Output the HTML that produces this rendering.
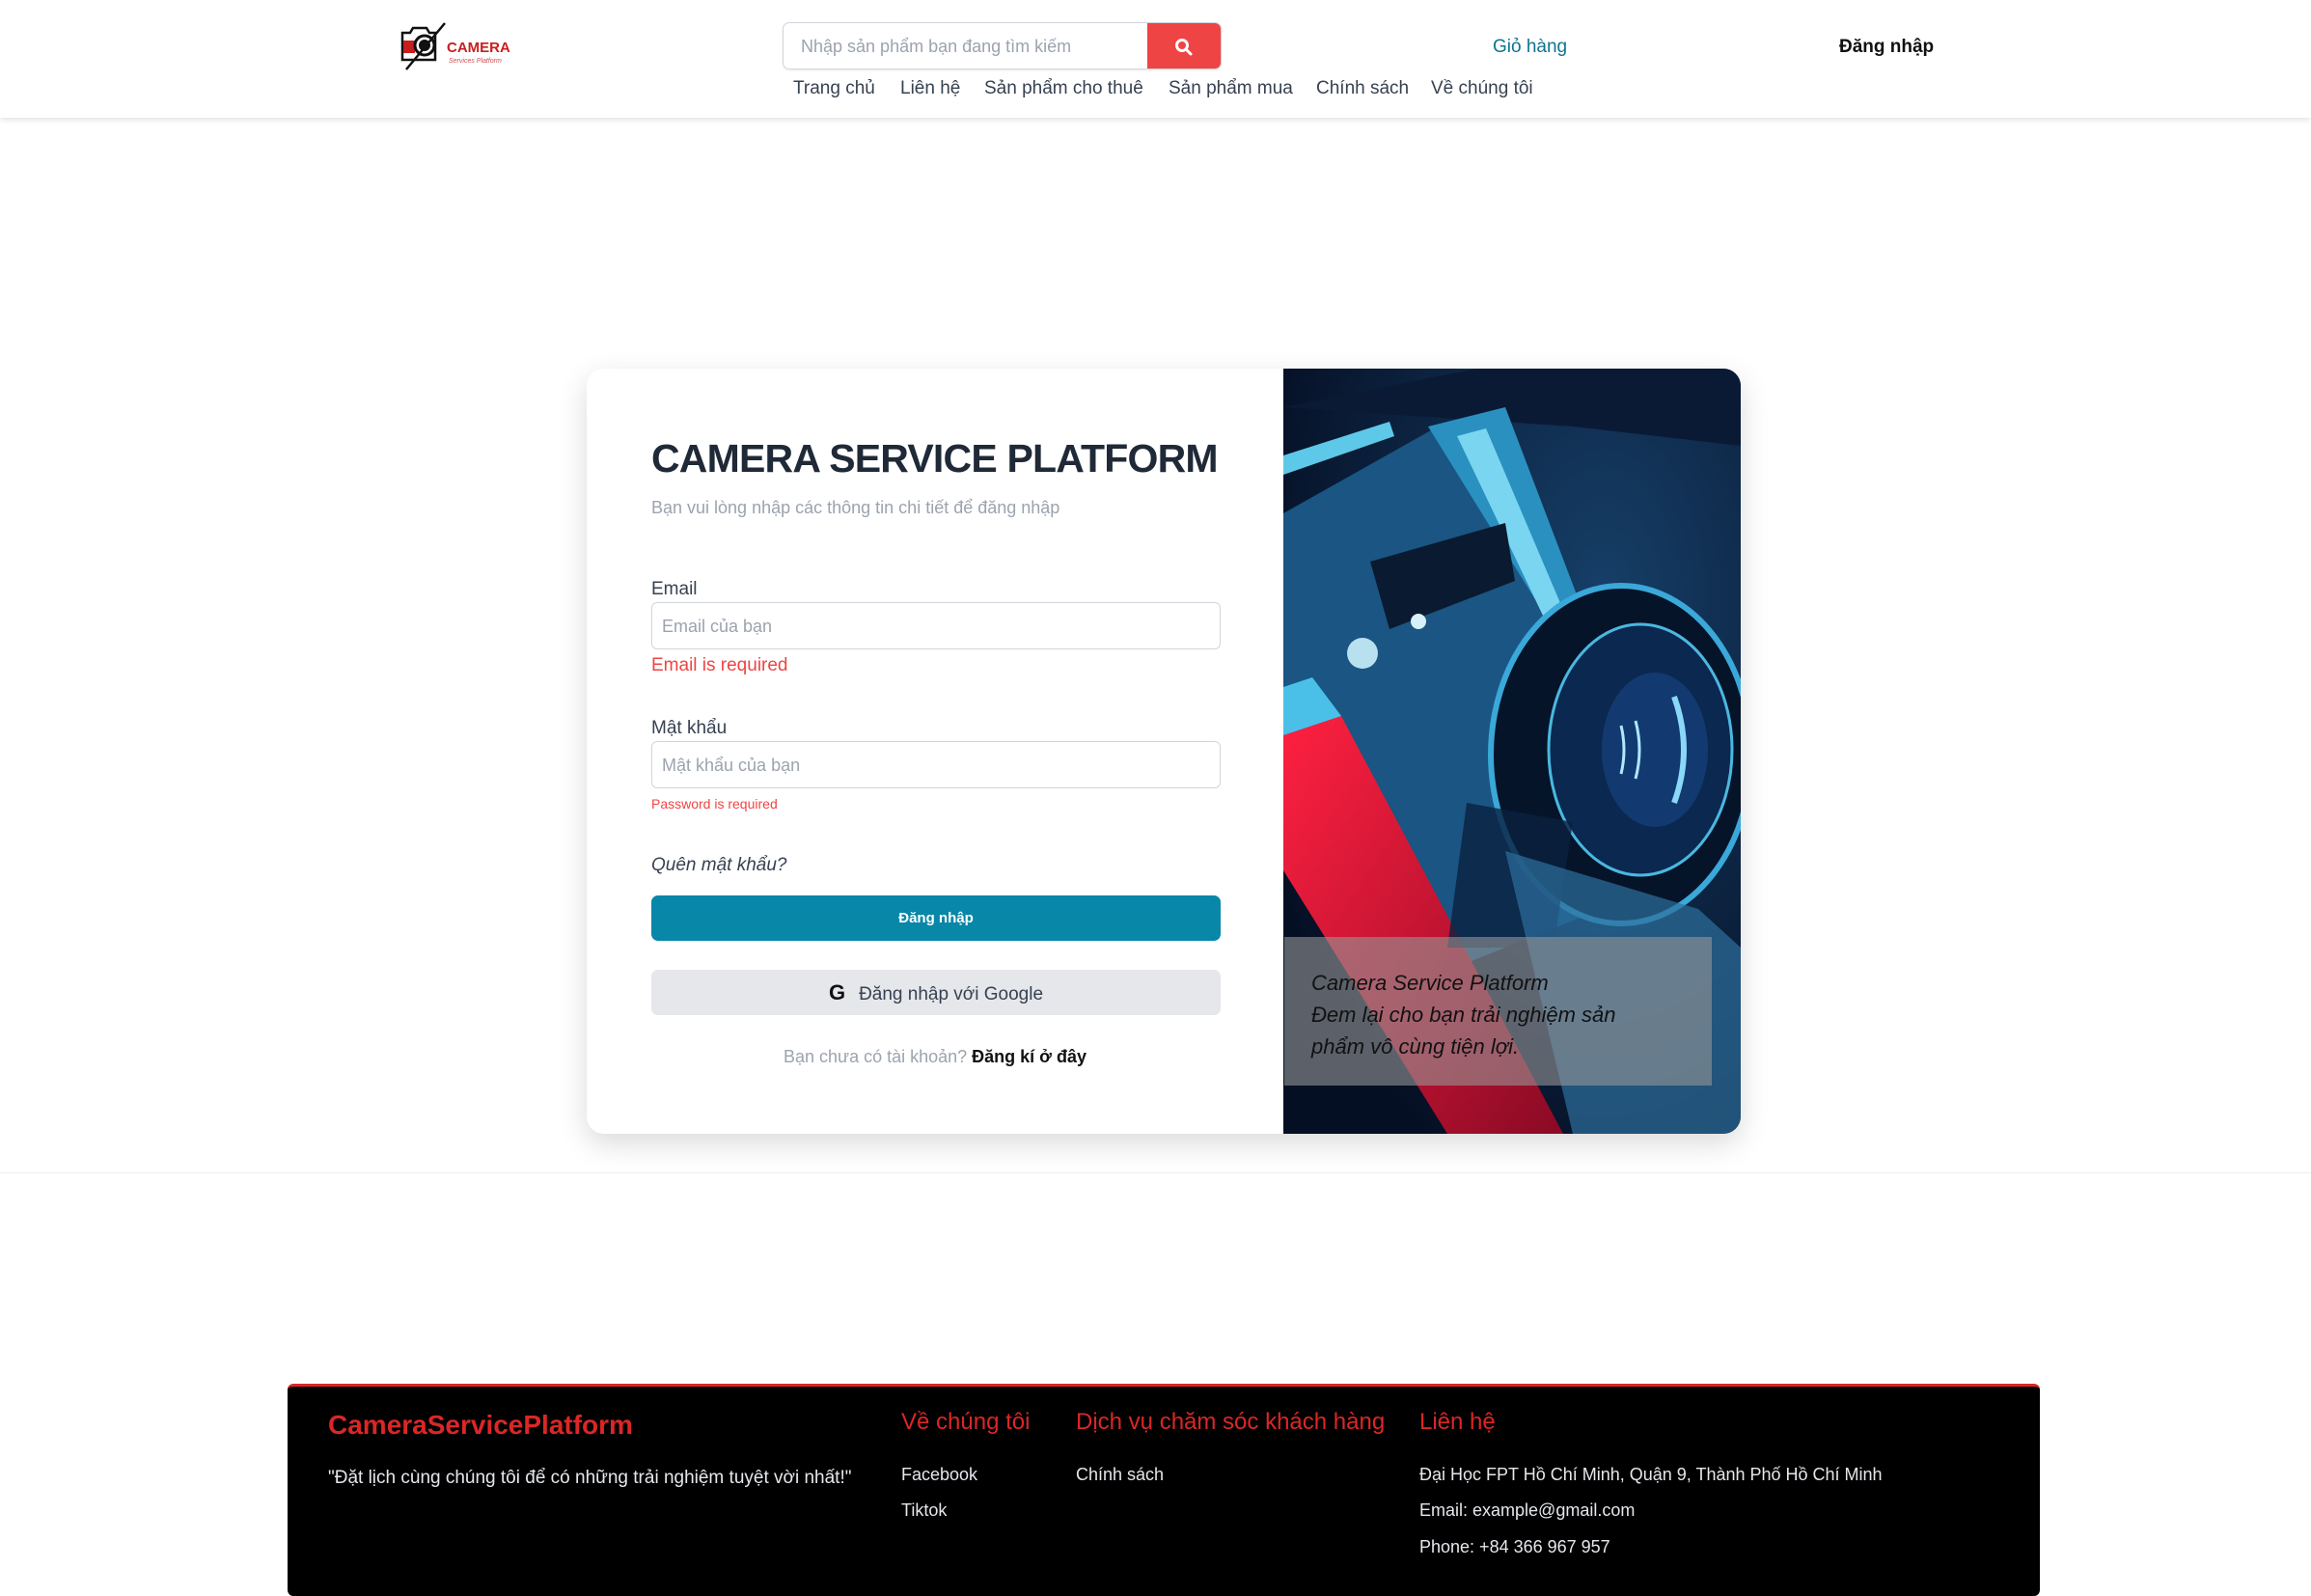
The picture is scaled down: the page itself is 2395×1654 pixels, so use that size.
<!DOCTYPE html>
<html><head><meta charset="utf-8">
<style>
*{box-sizing:border-box;margin:0;padding:0}
body{width:2395px;height:1643px;background:#fff;font-family:"Liberation Sans","DejaVu Sans",sans-serif;position:relative;overflow:hidden;color:#1f2937}
.a{position:absolute;white-space:nowrap}
header{position:absolute;left:0;top:0;width:2395px;height:122px;background:#fff;box-shadow:0 2px 6px rgba(0,0,0,.12)}
.nav span{position:absolute;top:81px;font-size:19px;color:#374151}
.inp{position:absolute;left:675px;width:590px;height:49px;border:1px solid #d1d5db;border-radius:6px;font-size:18px;color:#9ca3af;padding:14px 10px;line-height:20px}
.lbl{font-size:19px;color:#374151}
.err{color:#ef4444}
footer{position:absolute;left:298px;top:1434px;width:1816px;height:220px;background:#000;border-top:3px solid #dc2626;border-radius:6px}
footer .a{color:#e5e7eb;font-size:18px}
footer .h{color:#dc2626;font-size:24px}
</style></head><body>
<header>
 <svg class="a" style="left:413px;top:20px" width="115" height="56" viewBox="0 0 115 56">
  <path d="M4 14h8l3-5h14l3 5h6v28H4z" fill="none" stroke="#111" stroke-width="2.5"/>
  <rect x="5" y="22" width="12" height="13" fill="#c81e1e"/>
  <circle cx="27" cy="27" r="10" fill="none" stroke="#111" stroke-width="3"/>
  <circle cx="27" cy="27" r="6" fill="#111"/>
  <path d="M8 52L48 4" stroke="#111" stroke-width="2.5"/>
  <text x="50" y="34" font-family="Liberation Sans" font-weight="bold" font-size="15" fill="#c81e1e">CAMERA</text>
  <text x="52" y="45" font-family="Liberation Sans" font-style="italic" font-size="7" fill="#d05050">Services Platform</text>
 </svg>
 <div class="a" style="left:811px;top:23px;width:455px;height:49px;border:1px solid #d1d5db;border-radius:7px;overflow:hidden;box-shadow:0 1px 2px rgba(0,0,0,.08)">
  <div class="a" style="left:18px;top:14px;font-size:18px;color:#9ca3af">Nhập sản phẩm bạn đang tìm kiếm</div>
  <div class="a" style="right:0;top:0;width:76px;height:49px;background:#ef4444">
   <svg class="a" style="left:28px;top:15px" width="20" height="20" viewBox="0 0 20 20"><circle cx="8" cy="8" r="5.5" fill="none" stroke="#fff" stroke-width="3"/><path d="M12 12l5 5" stroke="#fff" stroke-width="3" stroke-linecap="round"/></svg>
  </div>
 </div>
 <div class="nav">
  <span style="left:822px">Trang chủ</span><span style="left:933px">Liên hệ</span><span style="left:1020px">Sản phẩm cho thuê</span><span style="left:1211px">Sản phẩm mua</span><span style="left:1364px">Chính sách</span><span style="left:1483px">Về chúng tôi</span>
 </div>
 <div class="a" style="left:1547px;top:38px;font-size:19px;color:#0e7490">Giỏ hàng</div>
 <div class="a" style="left:1906px;top:38px;font-size:19px;color:#111;font-weight:600">Đăng nhập</div>
</header>

<div class="a" style="left:0;top:1215px;width:2395px;height:1px;background:#eee"></div>

<div class="a" style="left:608px;top:382px;width:1196px;height:793px;border-radius:18px;background:#fff;box-shadow:0 10px 30px rgba(0,0,0,.15);overflow:hidden">
 <div class="a" style="left:67px;top:70px;font-size:41px;font-weight:bold;color:#1f2937;letter-spacing:-0.8px">CAMERA SERVICE PLATFORM</div>
 <div class="a" style="left:67px;top:134px;font-size:18px;color:#9ca3af">Bạn vui lòng nhập các thông tin chi tiết để đăng nhập</div>
 <div class="a lbl" style="left:67px;top:218px">Email</div>
 <div class="inp" style="left:67px;top:242px">Email của bạn</div>
 <div class="a err" style="left:67px;top:297px;font-size:19px">Email is required</div>
 <div class="a lbl" style="left:67px;top:362px">Mật khẩu</div>
 <div class="inp" style="left:67px;top:386px">Mật khẩu của bạn</div>
 <div class="a err" style="left:67px;top:443px;font-size:14px">Password is required</div>
 <div class="a" style="left:67px;top:504px;font-size:19px;font-style:italic;color:#374151">Quên mật khẩu?</div>
 <div class="a" style="left:67px;top:546px;width:590px;height:47px;background:#0887a8;border-radius:7px;color:#fff;font-weight:bold;font-size:15px;text-align:center;line-height:47px">Đăng nhập</div>
 <div class="a" style="left:67px;top:623px;width:590px;height:47px;background:#e5e7eb;border-radius:7px;color:#374151;font-size:19px;text-align:center;line-height:47px"><b style="font-size:22px;color:#111;margin-right:14px">G</b>Đăng nhập với Google</div>
 <div class="a" style="left:0;top:703px;width:722px;text-align:center;font-size:18px;color:#9ca3af">Bạn chưa có tài khoản? <b style="color:#111">Đăng kí ở đây</b></div>

 <svg class="a" style="left:722px;top:0" width="474" height="793" viewBox="0 0 474 793">
  <defs>
   <radialGradient id="bg" cx="0.7" cy="0.3" r="0.8"><stop offset="0" stop-color="#163f68"/><stop offset="1" stop-color="#050f24"/></radialGradient>
   <linearGradient id="red" x1="0" y1="0" x2="1" y2="1"><stop offset="0" stop-color="#ff2040"/><stop offset="1" stop-color="#8a0a25"/></linearGradient>
  </defs>
  <rect width="474" height="793" fill="url(#bg)"/>
  <path d="M0 40L200 0L474 0L474 80L300 60Z" fill="#0a1a35"/>
  <path d="M0 150L160 60L310 250L330 560L180 620L0 400Z" fill="#1a5583"/>
  <path d="M0 90L110 55L115 70L0 110Z" fill="#5ec8e8"/>
  <path d="M150 60L230 40L310 250L280 270Z" fill="#2a90c0"/>
  <path d="M180 70L210 62L290 250L270 258Z" fill="#7ad6f0"/>
  <path d="M90 200L230 160L240 220L110 270Z" fill="#0a1a30"/>
  <circle cx="82" cy="295" r="16" fill="#b8e0ee"/>
  <circle cx="140" cy="262" r="8" fill="#d8f0f8"/>
  <path d="M0 380L60 360L290 793L170 793L0 520Z" fill="url(#red)"/>
  <path d="M0 330L30 320L60 360L0 380Z" fill="#4ac0e8"/>
  <ellipse cx="350" cy="400" rx="135" ry="175" fill="#06142a" stroke="#3aa8d8" stroke-width="6"/>
  <ellipse cx="370" cy="395" rx="95" ry="130" fill="#0b2850" stroke="#4ab8e0" stroke-width="3"/>
  <ellipse cx="385" cy="395" rx="55" ry="80" fill="#123a70"/>
  <path d="M405 340q20 55 0 110" fill="none" stroke="#8ad8f8" stroke-width="6"/>
  <path d="M350 370q6 25 0 50M365 365q8 30 0 60" fill="none" stroke="#b0e8ff" stroke-width="3"/>
  <path d="M190 450L300 470L280 600L170 600Z" fill="#0a2040" opacity=".8"/>
  <path d="M230 500L430 560L474 600L474 793L300 793Z" fill="#2e6f9c" opacity=".7"/>
 </svg>
 <div class="a" style="left:723px;top:589px;width:443px;height:154px;background:rgba(150,150,150,.6)"></div>
 <div class="a" style="left:751px;top:620px;font-size:22px;font-style:italic;color:#111;line-height:33px;white-space:normal;width:360px">Camera Service Platform<br>Đem lại cho bạn trải nghiệm sản phẩm vô cùng tiện lợi.</div>
</div>

<footer>
 <div class="a" style="left:42px;top:24px;font-size:28px;font-weight:bold;color:#dc2626">CameraServicePlatform</div>
 <div class="a" style="left:42px;top:84px;font-size:19px">"Đặt lịch cùng chúng tôi để có những trải nghiệm tuyệt vời nhất!"</div>
 <div class="a h" style="left:636px;top:23px">Về chúng tôi</div>
 <div class="a h" style="left:817px;top:23px">Dịch vụ chăm sóc khách hàng</div>
 <div class="a h" style="left:1173px;top:23px">Liên hệ</div>
 <div class="a" style="left:636px;top:81px">Facebook</div>
 <div class="a" style="left:636px;top:118px">Tiktok</div>
 <div class="a" style="left:817px;top:81px">Chính sách</div>
 <div class="a" style="left:1173px;top:81px">Đại Học FPT Hồ Chí Minh, Quận 9, Thành Phố Hồ Chí Minh</div>
 <div class="a" style="left:1173px;top:118px">Email: example@gmail.com</div>
 <div class="a" style="left:1173px;top:156px">Phone: +84 366 967 957</div>
</footer>
</body></html>
